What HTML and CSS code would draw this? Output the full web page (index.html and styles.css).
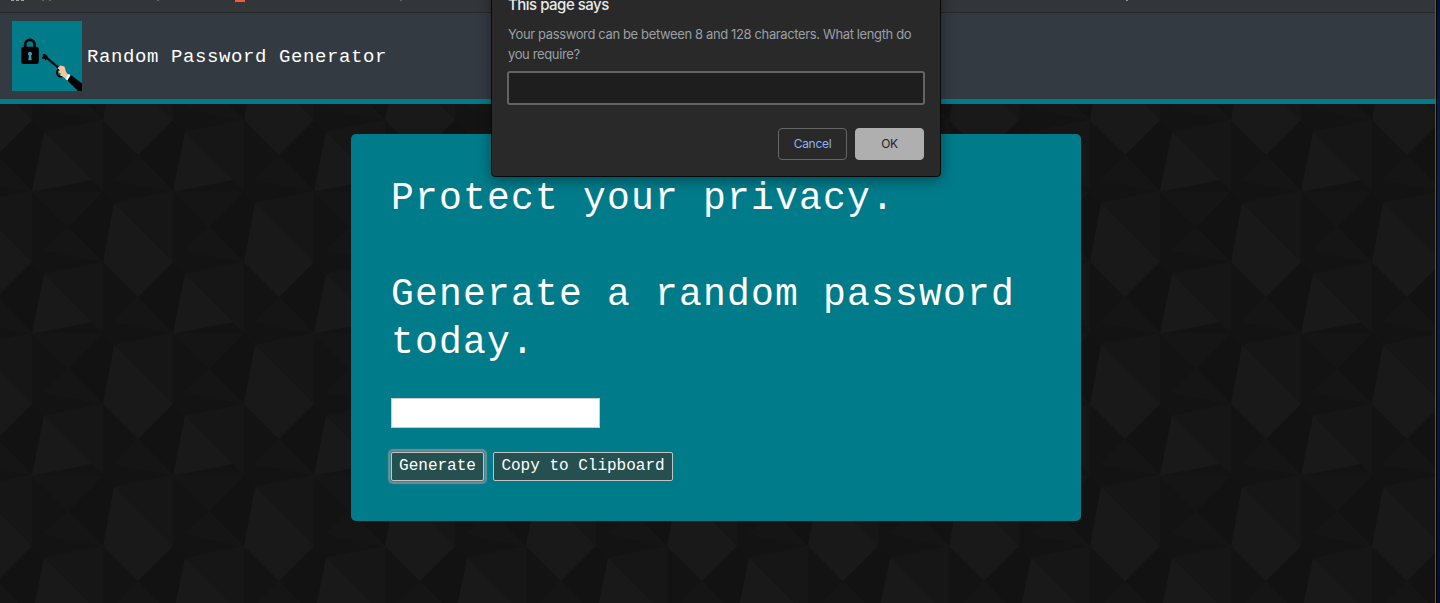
FILE: index.html
```
<!DOCTYPE html>
<html lang="en">
<head>
<meta charset="utf-8">
<title>Random Password Generator</title>
<link rel="stylesheet" href="styles.css">
</head>
<body>
<div class="window">
  <div class="bookmarks">
    <svg class="marks" viewBox="0 0 1435 12" width="1435" height="12">
      <path fill="#a0a3a5" d="M11 0h3v1h-3zM16 0h3v1h-3zM21 0h3v1h-3z"/>
      <path fill="#606366" d="M42 0h2v1h-2zM49 0h2v1h-2zM157 0h2v1h-2zM400 0h2v1h-2z"/>
      <path fill="#fb5a3a" d="M235 0h10v2h-10z"/>
      <path fill="#909396" d="M1126 0h2v1h-2z"/>
    </svg>
  </div>
  <header class="header">
    <svg class="logo" viewBox="0 0 70 70" width="70" height="70">
      <rect width="70" height="70" fill="#007b8a"/>
      <path d="M13.200 28v-4.500a4.700 4.700 0 0 1 9.400 0V28" fill="none" stroke="#000" stroke-width="2.700"/>
      <rect x="9.200" y="25.800" width="17.600" height="17.200" rx="2.500"/>
      <path d="M18 30.700a2.100 2.100 0 0 1 1.100 3.900l.6 4.700h-3.400l.6-4.700A2.100 2.100 0 0 1 18 30.700z" fill="#3a9dab"/>
      <path d="M32 34.500L49 49" stroke="#000" stroke-width="2.200"/>
      <path d="M29.700 36.500l1.300-1-.3-2 2-.8 3 2.500-1.500 1.500.6 1.500-1.300 1-1.200-1.500-1.500.3z"/>
      <ellipse cx="48.500" cy="51.500" rx="3.500" ry="4" fill="none" stroke="#000" stroke-width="2"/>
      <path d="M45.500 47l3-2.500 4 1 1.500 5.500 2.500 3-2.500 4-3.500-2.500-2.500-1 1-2-3-1.500 2-1.500z" fill="#f6c6a0"/>
      <path d="M56.500 53l2 1-3 5.500-2-1.500z" fill="#fff"/>
      <path d="M59 54l11 8.500V70h-4L55.500 59.500z"/>
    </svg>
    <h1 class="title">Random Password Generator</h1>
  </header>
  <main class="main">
    <section class="card">
      <h2 class="headline">Protect your privacy.<br><br>Generate a random password today.</h2>
      <input class="result" type="text" readonly aria-label="Password">
      <div class="actions">
        <button class="btn btn-focus">Generate</button>
        <button class="btn btn-copy">Copy to Clipboard</button>
      </div>
    </section>
  </main>
</div>
<div class="desktop"></div>
<div class="dialog" role="dialog">
  <div class="dialog-title">This page says</div>
  <p class="dialog-text">Your password can be between 8 and 128 characters. What length do<br>you require?</p>
  <input class="dialog-input" type="text" aria-label="Length">
  <div class="dialog-actions">
    <button class="dialog-btn cancel">Cancel</button>
    <button class="dialog-btn ok">OK</button>
  </div>
</div>
</body>
</html>
```
FILE: styles.css
```
* { box-sizing: border-box; }

body {
  margin: 0;
  height: 603px;
  display: flex;
  overflow: hidden;
  background: #000;
  font-family: "Courier New", "Liberation Mono", monospace;
}

.window {
  width: 1436px;
  height: 603px;
  display: flex;
  flex-direction: column;
  border-right: 1px solid #55585a;
}

.desktop {
  width: 3px;
  margin-left: 1px;
  background: linear-gradient(#041236, #0a2146 25%, #0a1c3c 60%, #040c2c);
}

.bookmarks {
  height: 13px;
  flex: none;
  background: #323639;
  border-bottom: 1px solid #272829;
}

.marks { display: block; }

.header {
  height: 91px;
  flex: none;
  display: flex;
  align-items: center;
  gap: 5px;
  padding: 0 12px;
  background: #343a42;
  border-bottom: 5px solid #007b8a;
}

.logo { display: block; }

.title {
  margin: 0;
  padding-top: 2px;
  color: #fff;
  font-size: 19px;
  font-weight: 400;
  line-height: 24px;
  letter-spacing: .6px;
}

.main {
  flex: 1;
  padding: 30px 0 0 351px;
  background-color: #131313;
  background-position: 32px 16px;
  background-image: url("data:image/svg+xml,%3Csvg xmlns='http://www.w3.org/2000/svg' width='141' height='142'%3E%3Cg fill='%23191919'%3E%3Cpath d='M12 12L60 60L0 71.500zM82 83L141 142H71zM71 0H141L106 35z'/%3E%3C/g%3E%3Cg fill='%23161616'%3E%3Cpath d='M12 12L71 0V70L60 60zM82 83L141 71V142z'/%3E%3C/g%3E%3Cg fill='%23151515'%3E%3Cpath d='M0 71.500H71L36 107zM36 107L71 142L12 130zM106 35L141 71L82 60z'/%3E%3C/g%3E%3Cg fill='%23121212'%3E%3Cpath d='M36 107L71 71L82 83L71 142zM106 35L141 0V71zM0 0L12 12L0 71z'/%3E%3C/g%3E%3C/svg%3E");
}

.card {
  width: 730px;
  height: 387px;
  padding: 41px 40px 0;
  background: #007b8a;
  border-radius: 5px;
}

.headline {
  margin: 0;
  color: #fff;
  font-size: 38px;
  font-weight: 400;
  line-height: 48px;
  letter-spacing: 1.2px;
}

.result {
  display: block;
  width: 209px;
  height: 30px;
  margin: 31px 0 24px;
  border: 1px solid #ccc;
  background: #fff;
}

.actions {
  display: flex;
  gap: 9px;
}

.btn {
  height: 29px;
  padding: 0 0 1px;
  border: 1px solid #c3c3c3;
  border-radius: 2px;
  background: #264f50;
  color: #fff;
  font: 16px/24px "Courier New", "Liberation Mono", monospace;
  white-space: nowrap;
}

.btn-focus {
  width: 93px;
  box-shadow: 0 0 0 1px #3f8791, 0 0 1px 3px #6c8f96;
}

.btn-copy { width: 180px; }

/* Browser prompt, hanging over the page from the top edge */
.dialog {
  position: absolute;
  top: -20px;
  left: 491px;
  width: 450px;
  height: 197px;
  padding: 14px 16px;
  border: 1px solid #090909;
  border-radius: 4px;
  background: #292929;
  box-shadow: 0 3px 14px rgba(0, 0, 0, .4);
  font-family: Inter, sans-serif;
}

.dialog-title {
  color: #e8eaed;
  font-size: 15px;
  font-weight: 500;
  line-height: 20px;
  letter-spacing: -.5px;
}

.dialog-text {
  margin: 9px 0 7px;
  color: #9aa0a6;
  font-size: 13px;
  line-height: 20px;
  letter-spacing: -.37px;
  white-space: nowrap;
}

.dialog-input {
  display: block;
  width: 418px;
  height: 34px;
  margin-left: -1px;
  border: 2px solid #636363;
  border-radius: 3px;
  background: #1e1e1e;
}

.dialog-actions {
  display: flex;
  justify-content: flex-end;
  gap: 8px;
  margin-top: 23px;
}

.dialog-btn {
  width: 69px;
  height: 32px;
  padding: 0;
  border: 1px solid #646567;
  border-radius: 4px;
  background: transparent;
  font: 12px/20px Inter, sans-serif;
  letter-spacing: -.3px;
}

.cancel { color: #8ab4f8; }

.ok {
  border-color: #afafaf;
  background: #afafaf;
  color: #222;
}
```
